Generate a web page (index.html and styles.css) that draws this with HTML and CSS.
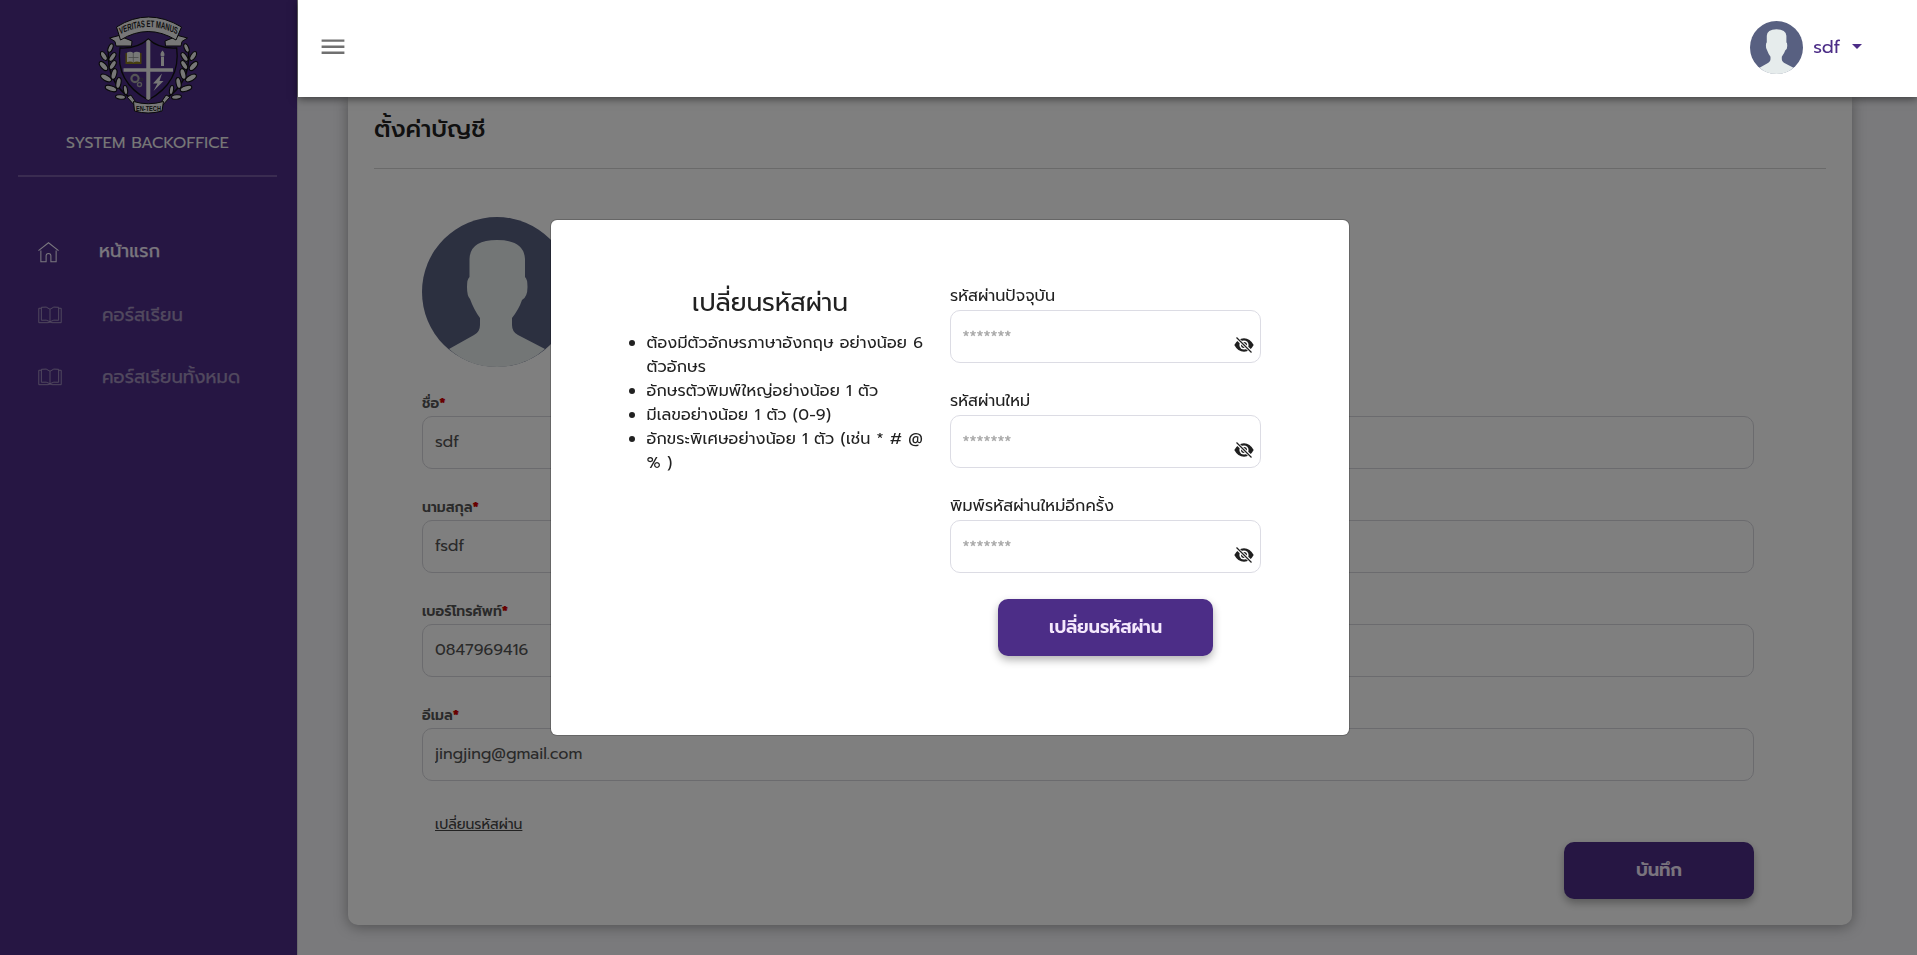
FILE: index.html
```html
<!DOCTYPE html>
<html lang="th">
<head>
<meta charset="utf-8">
<title>System Backoffice</title>
<link rel="stylesheet" href="styles.css">
</head>
<body>
<svg class="defs" width="0" height="0" aria-hidden="true">
  <symbol id="avatar" viewBox="0 0 150 150">
    <circle cx="75" cy="75" r="75" fill="#586081"/>
    <path fill="#e6ecec" d="M27 132L52 118Q58 115 58 108V101Q52 93 48 82Q45 79 45 70Q45 62 47.500 60V42Q48 23 75 23Q102 23 103 42V60Q105.500 62 105.500 70Q105.500 80 100 83Q97 92 90 101V108Q90 115 96 118L123 132Q103 150 75 150Q47 150 27 132Z"/>
  </symbol>
  <symbol id="book" viewBox="0 0 25 18">
    <path fill="none" stroke="currentColor" stroke-width="1" d="M12.5 3Q9 -.5 3.5 1V14.5Q9 13.5 12.5 16Q16 13.5 21.500 14.500V1Q16 -.5 12.500 3V16M3.500 2H.8V17H10.500Q12.500 15.800 14.500 17H24.200V2H21.500"/>
  </symbol>
  <symbol id="eye-off" viewBox="0 0 20 16">
    <path fill="#1f1f1f" d="M.3 8Q4 1.200 10 1.200T19.700 8Q16 14.800 10 14.800T.3 8Z"/>
    <circle cx="10" cy="8" r="4.600" fill="#fff"/>
    <circle cx="10" cy="8" r="3" fill="#1f1f1f"/>
    <path stroke="#fff" stroke-width="3.200" d="M2 .5L18 15.500"/>
    <path stroke="#1f1f1f" stroke-width="1.200" d="M2.500 .5L17.500 15.500"/>
  </symbol>
  <symbol id="laurel" viewBox="0 0 100 100" overflow="visible">
    <path fill="none" stroke="#111" stroke-width="1.500" d="M9.500 35Q7 68 33 84"/>
    <g fill="#eee" stroke="#111" stroke-width="1.100">
      <ellipse cx="11.500" cy="33" rx="4.500" ry="2.200" transform="rotate(-68 11.500 33)"/>
      <ellipse cx="4.800" cy="41" rx="5" ry="2.500" transform="rotate(58 4.800 41)"/>
      <ellipse cx="13.500" cy="42" rx="5" ry="2.400" transform="rotate(-55 13.500 42)"/>
      <ellipse cx="4.500" cy="51" rx="5.500" ry="2.700" transform="rotate(48 4.500 51)"/>
      <ellipse cx="13.800" cy="50" rx="5" ry="2.500" transform="rotate(-58 13.800 50)"/>
      <ellipse cx="7" cy="63" rx="6" ry="2.800" transform="rotate(28 7 63)"/>
      <ellipse cx="15" cy="59" rx="5.500" ry="2.700" transform="rotate(-75 15 59)"/>
      <ellipse cx="19.500" cy="68" rx="5.500" ry="2.500" transform="rotate(-80 19.500 68)"/>
      <ellipse cx="12" cy="73.500" rx="6" ry="2.700" transform="rotate(18 12 73.500)"/>
      <ellipse cx="26.500" cy="75" rx="4.500" ry="2" transform="rotate(80 26.500 75)"/>
      <ellipse cx="21.500" cy="82" rx="5" ry="2.200" transform="rotate(5 21.500 82)"/>
    </g>
  </symbol>
</svg>
<div class="app">
  <aside class="sidebar">
    <svg class="crest" viewBox="0 0 100 100">
      <use href="#laurel" width="100" height="100"/>
      <g transform="translate(99 0) scale(-1 1)"><use href="#laurel" width="100" height="100"/></g>
      <path fill="#4c2d87" stroke="#111" stroke-width="1.300" d="M49.300 24Q38 34 21 33Q16 67 49.300 85Q82 67 77.700 33Q60 34 49.300 24Z"/>
      <path fill="#eee" d="M47.300 26L49.300 24.500L51.300 26V84L49.300 85L47.300 84ZM24.500 53.300H74V56.800H24.500Z"/>
      <g fill="#eee" stroke="#111" stroke-width="1">
        <path d="M22 20L10.500 23L16 26.500L17 31H32.500L33 26L23 22ZM77 20L88.500 23L83 26.500L82 31H66.500L66 26L76 22Z"/>
        <path d="M17.500 12Q49 -8 82.500 12L77 25Q49 8 21.500 25Z"/>
        <path d="M36 86L32 80L28 82L37 92ZM63 86L67 80L71 82L62 92Z"/>
        <path d="M34.500 86.500Q49 91 64.500 86.500L63 96Q49 100 35.500 96Z"/>
      </g>
      <path fill="#8d7a1c" d="M26.500 38H42.500V49H26.500Z"/>
      <path fill="#eee" d="M28 37.500Q32 36 34.300 38Q37 36 41 37.500V47Q37 46 34.300 47.500Q32 46 28 47Z"/>
      <path stroke="#888" stroke-width=".7" fill="none" d="M34.300 38V47.500M29.500 42.500H39.500"/>
      <path fill="#eee" d="M62 42H65V51H62ZM63.500 35.500Q66.500 38.500 65 41.500H62Q60.500 38.500 63.500 35.500ZM63 58.500L54 68.500H58.500L54.500 76L64.500 66H60.500Z"/>
      <g fill="none" stroke="#aaa"><circle cx="36" cy="63.500" r="3.600" stroke-width="2.200"/><circle cx="40.500" cy="69.500" r="2" stroke-width="1.400"/><circle cx="42.500" cy="64.500" r="1.300" stroke="#555"/></g>
      <g transform="scale(.62 1)">
        <path id="motto" fill="none" d="M27 22Q80 2 133 22"/>
        <text class="motto" text-anchor="middle"><textPath href="#motto" startOffset="50%">VERITAS ET MANUS</textPath></text>
      </g>
      <text class="motto small" x="49.500" y="95.500" text-anchor="middle" textLength="25" lengthAdjust="spacingAndGlyphs">EN-TECH</text>
    </svg>
    <div class="brand">SYSTEM BACKOFFICE</div>
    <hr class="side-line">
    <nav class="nav">
      <a class="nav-item active"><svg class="home" viewBox="0 0 22 22"><path fill="none" stroke="currentColor" stroke-width="1.100" d="M.5 9L11 .8L21.500 9M3 9V20.700H8.500V14.500Q8.500 12 11 12T13.500 14.500V20.700H19V9"/></svg><span class="nav-text">หน้าแรก</span></a>
      <a class="nav-item"><svg class="book"><use href="#book"/></svg><span class="nav-text">คอร์สเรียน</span></a>
      <a class="nav-item"><svg class="book"><use href="#book"/></svg><span class="nav-text">คอร์สเรียนทั้งหมด</span></a>
    </nav>
  </aside>
  <header class="topbar">
    <svg class="burger" viewBox="0 0 24 16"><path fill="#707070" d="M.6 .4H23.400V2.800H.6ZM.6 6.500H23.400V8.900H.6ZM.6 12.600H23.400V15H.6Z"/></svg>
    <div class="user"><svg class="user-pic"><use href="#avatar"/></svg><span class="user-name">sdf</span><i class="caret"></i></div>
  </header>
  <main class="content">
    <section class="card">
      <h1 class="card-title"><span>ตั้งค่าบัญชี</span></h1>
      <form class="form">
        <svg class="profile-pic"><use href="#avatar"/></svg>
        <div class="field"><label><span>ชื่อ</span><b>*</b></label><input value="sdf"></div>
        <div class="field"><label><span>นามสกุล</span><b>*</b></label><input value="fsdf"></div>
        <div class="field"><label><span>เบอร์โทรศัพท์</span><b>*</b></label><input value="0847969416"></div>
        <div class="field"><label><span>อีเมล</span><b>*</b></label><input value="jingjing@gmail.com"></div>
        <a class="change-link">เปลี่ยนรหัสผ่าน</a>
        <button type="button" class="btn save">บันทึก</button>
      </form>
    </section>
  </main>
</div>
<div class="overlay">
  <div class="modal">
    <div class="rules">
      <h2>เปลี่ยนรหัสผ่าน</h2>
      <ul>
        <li>ต้องมีตัวอักษรภาษาอังกฤษ อย่างน้อย 6<br>ตัวอักษร</li>
        <li>อักษรตัวพิมพ์ใหญ่อย่างน้อย 1 ตัว</li>
        <li>มีเลขอย่างน้อย 1 ตัว (0-9)</li>
        <li>อักขระพิเศษอย่างน้อย 1 ตัว (เช่น * # @<br>% )</li>
      </ul>
    </div>
    <div class="pw-form">
      <div class="pw"><label>รหัสผ่านปัจจุบัน</label><div class="pw-box"><span>*******</span><svg><use href="#eye-off"/></svg></div></div>
      <div class="pw"><label>รหัสผ่านใหม่</label><div class="pw-box"><span>*******</span><svg><use href="#eye-off"/></svg></div></div>
      <div class="pw"><label>พิมพ์รหัสผ่านใหม่อีกครั้ง</label><div class="pw-box"><span>*******</span><svg><use href="#eye-off"/></svg></div></div>
      <button type="button" class="btn submit">เปลี่ยนรหัสผ่าน</button>
    </div>
  </div>
</div>
</body>
</html>
```
FILE: styles.css
```css
* { box-sizing: border-box; }
body { margin: 0; font-family: Prompt, "Noto Sans Thai", Lato, sans-serif; font-size: 16px; color: #212121; overflow: hidden; }
.defs { position: absolute; }
.app { display: grid; grid-template-columns: 298px 1fr; grid-template-rows: 97px 858px; height: 955px; background: #f4f4f8; }
.sidebar { grid-row: 1 / 3; background: #4c2d87; border-right: 1px solid #d8d8dc; display: flex; flex-direction: column; align-items: center; padding-top: 15px; color: #fff; }
.crest { width: 100px; height: 100px; overflow: visible; }
.motto { font-family: "Liberation Sans", sans-serif; font-weight: 700; font-size: 9.6px; fill: #222; }
.motto.small { font-size: 7.5px; }
.brand { height: 28px; line-height: 28px; margin-top: 14px; white-space: nowrap; margin-right: 2px; color: #eee; letter-spacing: .14px; }
.side-line { width: 259px; height: 2px; border: 0; background: #7558a3; margin: 18px 2px 0 0; align-self: center; }
.nav { align-self: stretch; padding: 44px 0 0 38px; }
.nav-item { display: flex; align-items: center; height: 62px; color: #a392bd; font-size: 18px; letter-spacing: .1px; padding-top: 2px; -webkit-text-stroke: .25px; }
.nav-item.active { color: #f4eefc; padding-top: 0; }
.active .nav-text { margin-top: -2px; }
.home { width: 21px; height: 21px; margin-right: 40px; }
.book { width: 24px; height: 18px; margin-right: 40px; }
.nav-text { white-space: nowrap; }
.topbar { position: relative; z-index: 5; background: #fff; box-shadow: 0 2px 8px rgba(0,0,0,.5); display: flex; align-items: center; justify-content: space-between; padding: 0 55px 0 23px; }
.burger { width: 24px; height: 16px; margin-top: -3px; }
.user { display: flex; align-items: center; color: #4c2d87; }
.user-pic { width: 53px; height: 53px; margin-top: -2px; }
.user-name { font-size: 18px; margin: -3px 12px 0 10px; }
.caret { border: 5px solid transparent; border-top-color: #4c2d87; border-bottom: 0; margin-top: -4px; }
.content { padding: 0 65px 30px 50px; }
.card { height: 828px; background: #fff; border-radius: 0 0 10px 10px; padding: 0 26px 26px; box-shadow: 0 2px 14px rgba(0,0,0,.35); }
.card-title { margin: 0; height: 72px; line-height: 64px; border-bottom: 1px solid #d5d5d5; font-size: 24px; font-weight: 500; }
.form { display: flex; flex-direction: column; padding: 48px 72px 0 48px; }
.profile-pic { width: 150px; height: 150px; margin-bottom: 19px; }
.field { margin-bottom: 21px; }
.field label { display: block; height: 30px; line-height: 36px; font-size: 14px; font-weight: 600; color: #555; }
.field b { color: #d00000; }
.field input { display: block; width: 100%; height: 53px; border: 1px solid #d6d6dc; border-radius: 10px; padding: 0 12px 1px; font: inherit; color: #555; background: transparent; }
.change-link { margin: 11px 0 5px 13px; align-self: flex-start; line-height: 24px; font-size: 14px; color: #444; text-decoration: underline; }
.btn { border: 0; border-radius: 10px; height: 57px; background: #4c2d87; color: #f4e8fc; font-family: inherit; font-weight: 600; font-size: 18px; letter-spacing: -.16px; padding: 0 0 1px; box-shadow: 0 4px 8px rgba(0,0,0,.3); }
.save { width: 190px; align-self: flex-end; }
.overlay { position: fixed; inset: 0; background: rgba(0,0,0,.5); }
.modal { position: absolute; left: 551px; top: 220px; width: 798px; height: 515px; background: #fff; border-radius: 6px; box-shadow: 0 0 0 1px rgba(0,0,0,.2); display: flex; padding: 61px 88px 0 65px; }
.rules { width: 308px; margin-right: 26px; }
.rules h2 { margin: 0; text-align: center; font-size: 25px; font-weight: 400; line-height: 44px; }
.rules ul { margin: 6px 0 0; padding-left: 30.5px; }
.rules li { line-height: 24px; white-space: nowrap; letter-spacing: .15px; }
.pw-form { width: 311px; display: flex; flex-direction: column; }
.pw { margin-bottom: 23px; }
.pw label { display: block; height: 29px; line-height: 30px; letter-spacing: .06px; }
.pw-box { height: 53px; border: 1px solid #dcdce4; border-radius: 10px; position: relative; padding: 0 11.5px; line-height: 52px; color: #a8a8a8; -webkit-text-stroke: .3px; }
.pw-box svg { position: absolute; width: 20px; height: 16px; right: 6px; bottom: 9px; }
.submit { width: 215px; align-self: center; margin: 3px 0 0; }
```
